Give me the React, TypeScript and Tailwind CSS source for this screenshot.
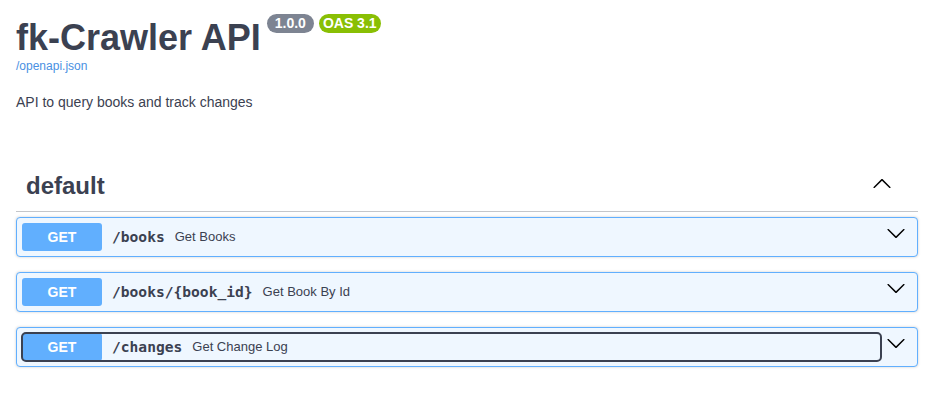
import React from "react";

const ChevronDown = () => (
  <svg width="20" height="20" viewBox="0 0 20 20" aria-hidden="true" className="block">
    <path
      fill="#000"
      d="M17.418 6.109c.272-.268.709-.268.979 0s.271.701 0 .969l-7.908 7.83c-.27.268-.707.268-.979 0l-7.908-7.83c-.27-.268-.27-.701 0-.969.271-.268.709-.268.979 0L10 13.25l7.418-7.141z"
    />
  </svg>
);

const ChevronUp = () => (
  <svg width="20" height="20" viewBox="0 0 20 20" aria-hidden="true" className="block">
    <path
      fill="#000"
      d="M17.418 14.908c.272.268.709.268.979 0s.271-.701 0-.969l-7.908-7.83c-.27-.268-.707-.268-.979 0l-7.908 7.83c-.27.268-.27.701 0 .969.271.268.709.268.979 0L10 7.767l7.418 7.141z"
    />
  </svg>
);

type Op = { path: string; summary: string; focused?: boolean };

const ops: Op[] = [
  { path: "/books", summary: "Get Books" },
  { path: "/books/{book_id}", summary: "Get Book By Id" },
  { path: "/changes", summary: "Get Change Log", focused: true },
];

function OpBlock({ op }: { op: Op }) {
  return (
    <div className="mb-[15px] rounded-[4px] border border-[#61affe] bg-[#eff7ff] shadow-[0_0_3px_rgba(0,0,0,0.19)]">
      <div className="flex items-start p-[5px]">
        <div
          className={
            op.focused
              ? "flex flex-1 items-center rounded-[4px] outline-2 outline-solid outline-[#3b4151] -outline-offset-1"
              : "flex flex-1 items-center"
          }
        >
          <span className="flex h-[28px] w-[80px] items-center justify-center rounded-[3px] bg-[#61affe] text-[14px] font-bold leading-[17px] text-white">
            GET
          </span>
          <span className="px-[10px] font-['DejaVu_Sans_Mono',monospace] text-[14.6px] font-bold leading-[18px] text-[#3b4151]">
            {op.path}
          </span>
          <span className="text-[13px] leading-[16px] text-[#3b4151]">{op.summary}</span>
        </div>
        <div className="ml-[5px] mr-[6px]">
          <ChevronDown />
        </div>
      </div>
    </div>
  );
}

export default function App() {
  return (
    <div className="min-h-[400px] w-full bg-white pl-4 pr-[19px] font-['Liberation_Sans',Arial,sans-serif] text-[#3b4151]">
      <div className="pt-[14px]">
        <div className="flex items-start">
          <h2 className="mt-[3px] text-[36px] font-bold leading-[41px] text-[#3b4151]">fk-Crawler API</h2>
          <span className="ml-[6px] rounded-full bg-[#7d8492] px-[8px] text-[14px] font-bold leading-[19px] text-white">
            1.0.0
          </span>
          <span className="ml-[5px] rounded-full bg-[#89bf04] px-[4px] text-[14px] font-bold leading-[19px] text-white">
            OAS 3.1
          </span>
        </div>
        <a className="mt-[1px] block text-[12px] leading-[14px] text-[#4990e2]">/openapi.json</a>
        <p className="mt-[21px] text-[14px] leading-[17px] text-[#3b4151]">API to query books and track changes</p>
      </div>

      <div className="mt-[51px]">
        <div className="mb-[5px] flex items-start border-b border-[rgba(59,65,81,0.3)] pb-[11px] pl-[10px] pr-[26px] pt-[10px]">
          <h3 className="flex-1 text-[24px] font-bold leading-[28px] text-[#3b4151]">default</h3>
          <div className="mt-[1px]">
            <ChevronUp />
          </div>
        </div>
        {ops.map((op) => (
          <OpBlock key={op.path} op={op} />
        ))}
      </div>
    </div>
  );
}
